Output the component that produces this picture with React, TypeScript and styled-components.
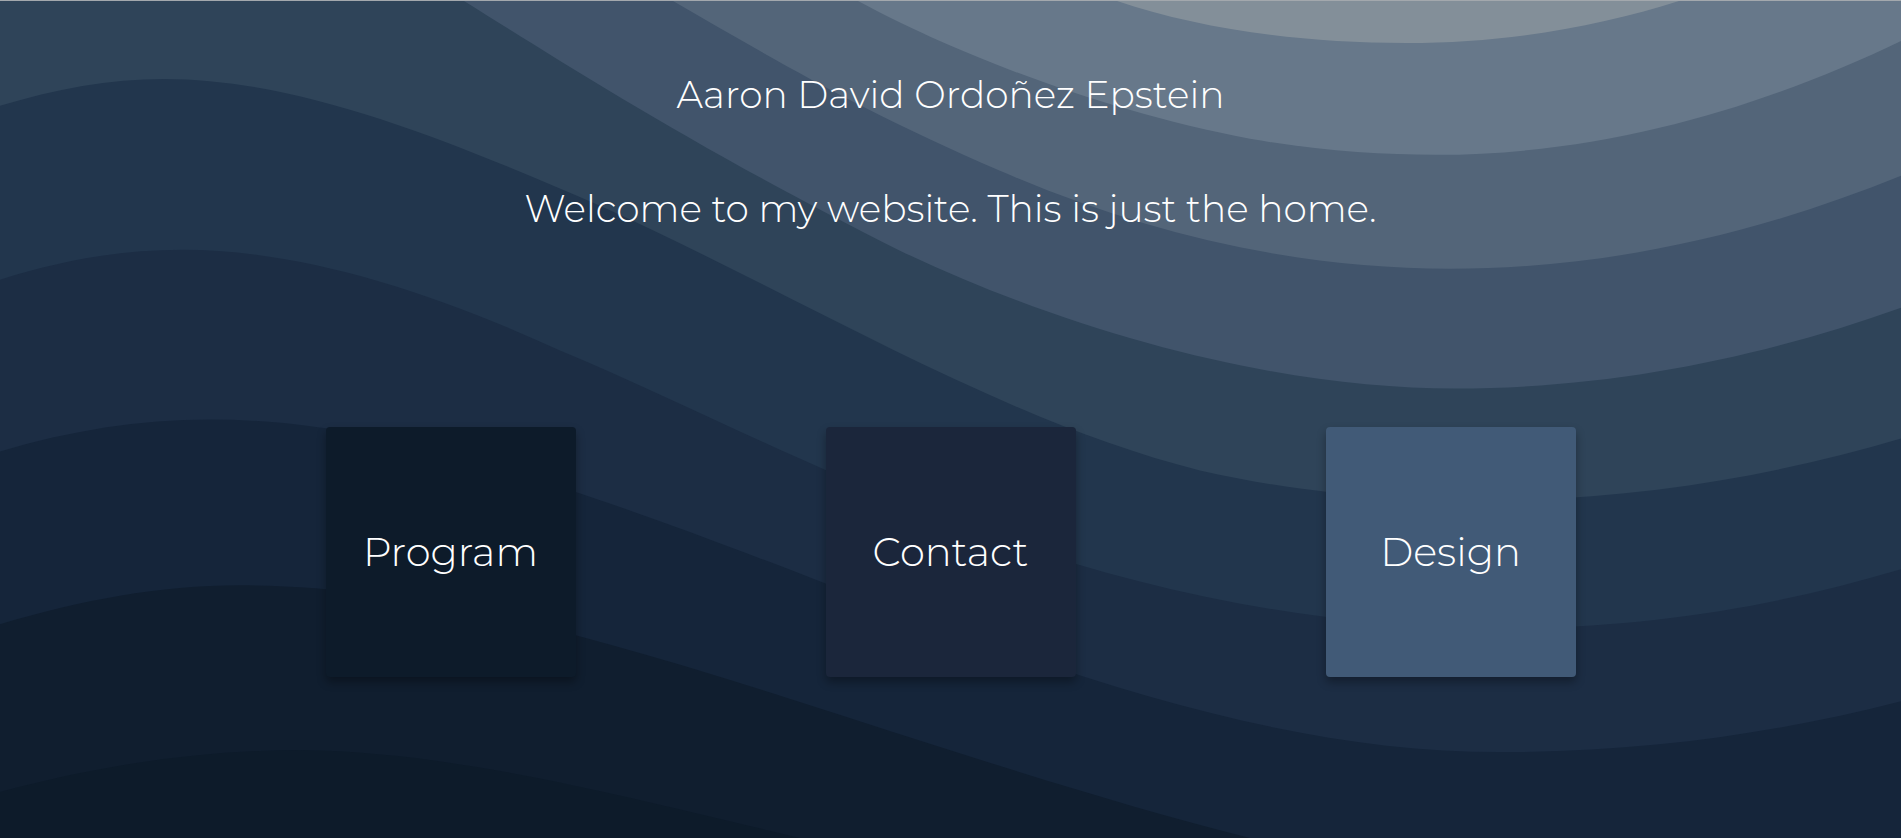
import React from "react";
import styled, { createGlobalStyle } from "styled-components";

const GlobalStyle = createGlobalStyle`
  html, body {
    margin: 0;
    padding: 0;
    background: #0d1b2a;
  }
  body {
    font-family: "Montserrat", "Inter", "Open Sans", sans-serif;
    font-weight: 300;
    color: #ffffff;
  }
  * { box-sizing: border-box; }
`;

const Page = styled.div`
  position: relative;
  min-height: 100vh;
  overflow: hidden;
  border-top: 1px solid #a3a8ad;
`;

const Backdrop = styled.svg`
  position: absolute;
  inset: 0;
  width: 100%;
  height: 100%;
  z-index: 0;
  display: block;
`;

const Content = styled.main`
  position: relative;
  z-index: 1;
  display: flex;
  flex-direction: column;
  align-items: center;
  padding-top: 75px;
`;

const Title = styled.h1`
  margin: 0;
  font-size: 37.5px;
  line-height: 1;
  font-weight: 300;
`;

const Tagline = styled.p`
  margin: 76px 0 0;
  font-size: 37.5px;
  line-height: 1;
  font-weight: 300;
`;

const CardRow = styled.nav`
  width: 100%;
  max-width: 1500px;
  margin-top: 200px;
  display: grid;
  grid-template-columns: repeat(3, 1fr);
  justify-items: center;
`;

const Card = styled.a<{ $bg: string }>`
  width: 250px;
  height: 250px;
  display: flex;
  align-items: center;
  justify-content: center;
  background: ${(p) => p.$bg};
  border-radius: 4px;
  box-shadow: 0 5px 10px rgba(0, 0, 0, 0.33);
  color: #ffffff;
  text-decoration: none;
  font-size: 40px;
  font-weight: 300;
  line-height: 1;
  cursor: pointer;
`;

const layers: { d: string; fill: string }[] = [
  {
    fill: "#101e2f",
    d: "M0,792 C100,765 200,750 300,750 C450,752 600,790 800,838 L1901,838 L1901,0 L0,0 Z",
  },
  {
    fill: "#15253a",
    d: "M0,624 C80,600 160,585 240,585 C400,585 560,625 788,698 C950,750 1100,800 1250,838 L1901,838 L1901,0 L0,0 Z",
  },
  {
    fill: "#1c2d44",
    d: "M0,451 C70,430 140,419 210,419 C380,419 560,480 830,585 C1100,690 1300,752 1500,752 C1650,752 1780,732 1901,701 L1901,0 L0,0 Z",
  },
  {
    fill: "#22364d",
    d: "M0,279 C60,260 120,249 182,249 C300,249 430,290 560,350 C800,450 1080,625 1500,628 C1650,628 1780,605 1901,569 L1901,0 L0,0 Z",
  },
  {
    fill: "#2f4459",
    d: "M0,105 C55,88 110,78 164,78 C300,78 450,140 600,205 C800,295 1000,420 1200,470 C1300,493 1400,500 1480,500 C1640,500 1780,474 1901,438 L1901,0 L0,0 Z",
  },
  {
    fill: "#41546b",
    d: "M464,0 C560,60 700,150 900,250 C1100,345 1300,388 1455,388 C1620,388 1770,354 1901,307 L1901,0 Z",
  },
  {
    fill: "#536579",
    d: "M673,0 C760,50 850,105 1000,170 C1150,235 1300,268 1450,268 C1620,268 1770,228 1901,175 L1901,0 Z",
  },
  {
    fill: "#67788a",
    d: "M858,0 C950,50 1100,110 1250,138 C1320,150 1380,154 1436,154 C1620,154 1780,98 1901,40 L1901,0 Z",
  },
  {
    fill: "#838f99",
    d: "M1117,0 C1200,28 1300,42 1406,42 C1510,42 1600,25 1679,0 Z",
  },
];

const cards = [
  { label: "Program", bg: "#0d1b2a" },
  { label: "Contact", bg: "#1b263b" },
  { label: "Design", bg: "#415a77" },
];

export default function App() {
  return (
    <>
      <GlobalStyle />
      <Page>
        <Backdrop viewBox="0 0 1901 838" preserveAspectRatio="none" aria-hidden="true">
          <rect x="0" y="0" width="1901" height="838" fill="#0d1b2a" />
          {layers.map((l, i) => (
            <path key={i} d={l.d} fill={l.fill} />
          ))}
        </Backdrop>
        <Content>
          <Title>Aaron David Ordoñez Epstein</Title>
          <Tagline>Welcome to my website. This is just the home.</Tagline>
          <CardRow>
            {cards.map((c) => (
              <Card key={c.label} $bg={c.bg} href="#">
                {c.label}
              </Card>
            ))}
          </CardRow>
        </Content>
      </Page>
    </>
  );
}
